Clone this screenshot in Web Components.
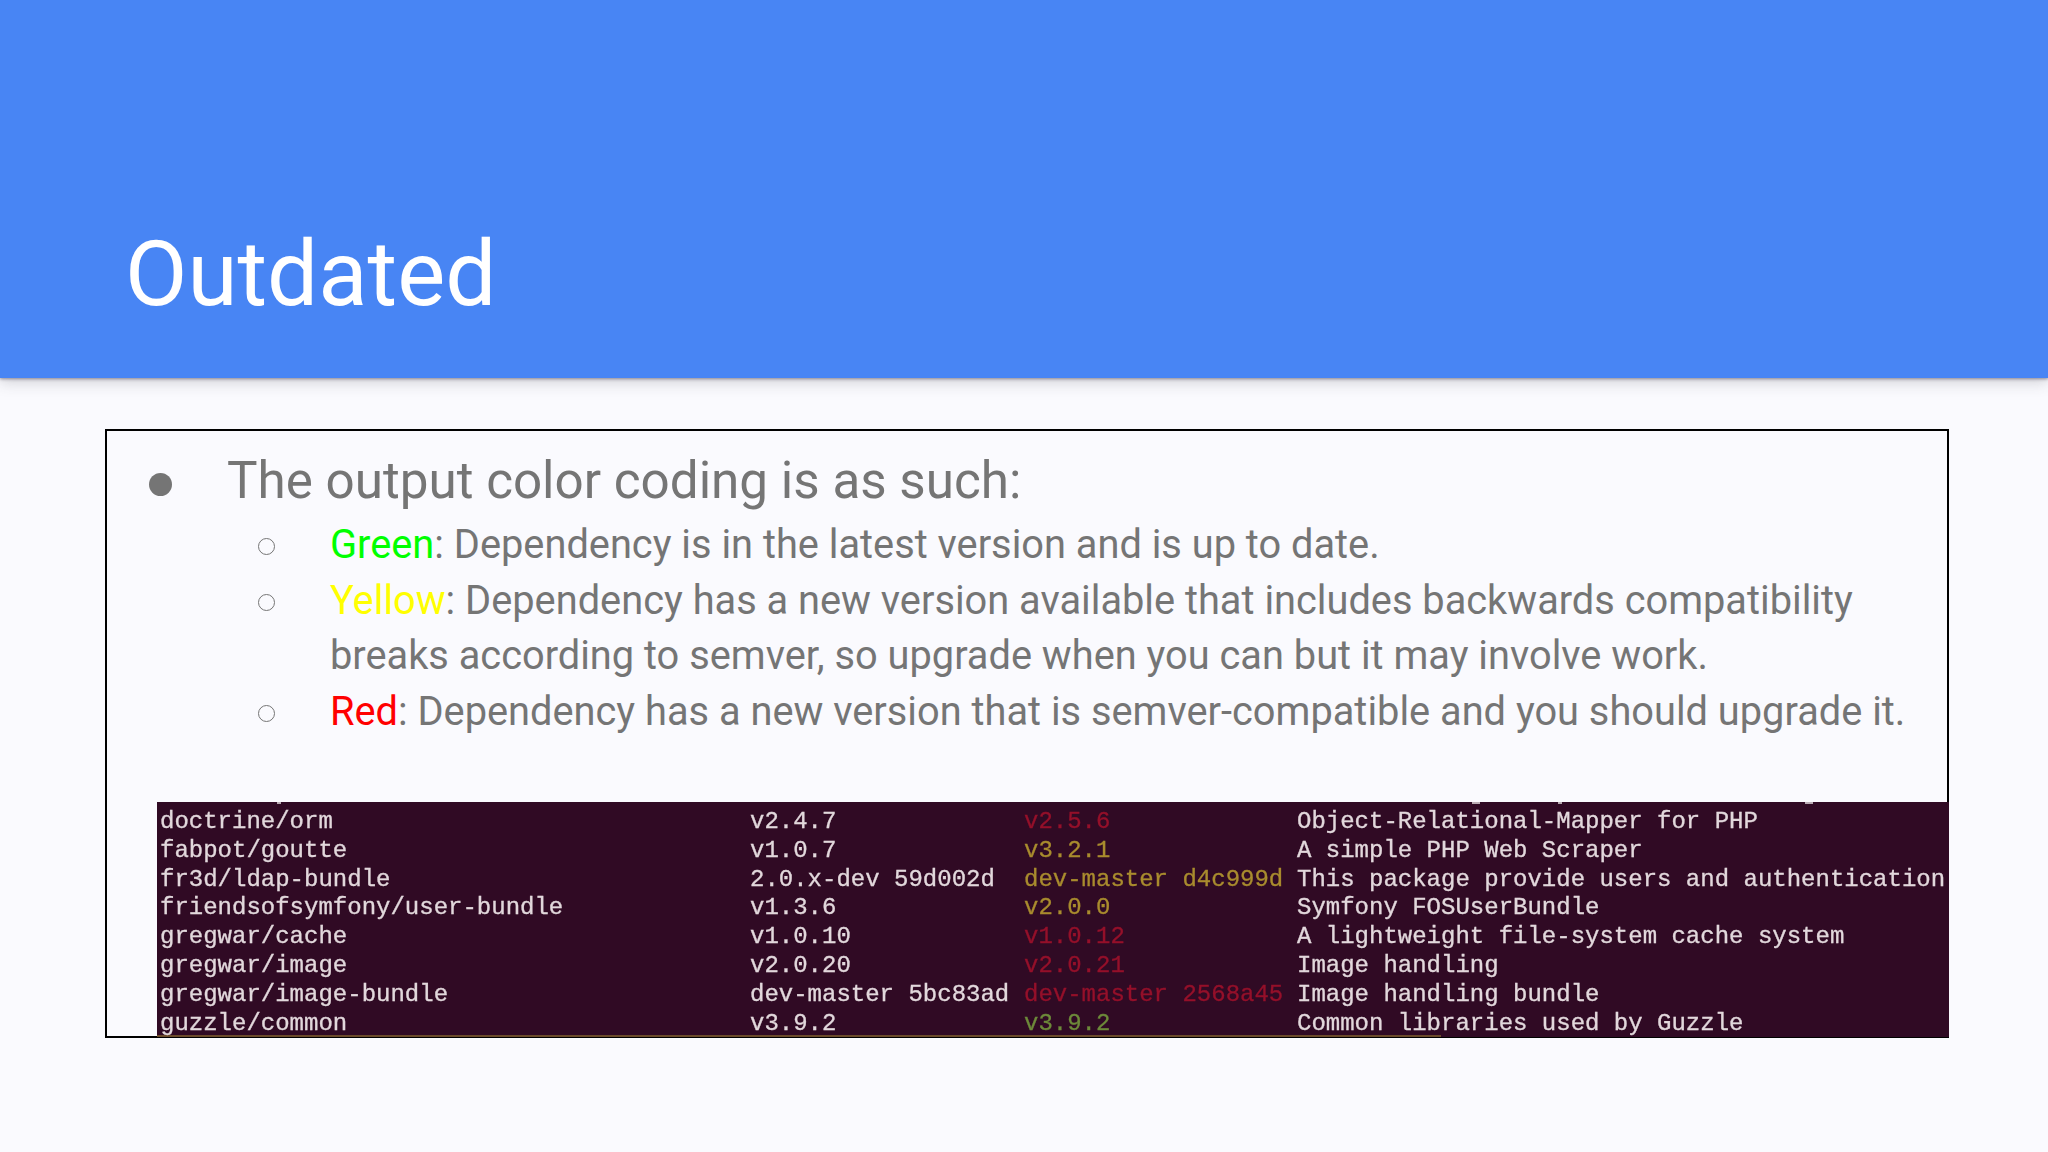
<!DOCTYPE html>
<html>
<head>
<meta charset="utf-8">
<title>Outdated</title>
<style>
    html, body { margin: 0; padding: 0; background: #fafafe; }
    body { width: 2048px; height: 1152px; overflow: hidden; font-family: Roboto, sans-serif; }
</style>
</head>
<body>

<template id="SlideHeader">
    <style>
        :host {
            display: flex;
            align-items: flex-end;
            box-sizing: border-box;
            height: 378px;
            padding: 0 0 49px 125px;
            background: #4885f4;
            box-shadow: 0 1px 3px rgba(60, 50, 70, .5), 0 4px 14px rgba(60, 60, 70, .22);
            position: relative;
            color: #fff;
            font: 400 90.7px/1.2 Roboto, sans-serif;
        }
    </style>
    <slot></slot>
</template>

<template id="SlideBox">
    <style>
        :host {
            display: block;
            box-sizing: border-box;
            width: 1844px;
            height: 609px;
            margin: 51px 0 0 105px;
            border: 2px solid #000;
            padding-top: 20px;
        }
    </style>
    <slot></slot>
</template>

<template id="TopItem">
    <style>
        :host {
            display: flex;
            align-items: flex-start;
            height: 66px;
            padding-left: 42px;
            color: #757575;
            font: 400 51.2px/60px Roboto, sans-serif;
        }
        i {
            flex: none;
            width: 23px;
            height: 23px;
            margin: 21.5px 55px 0 0;
            border-radius: 50%;
            background: #757575;
        }
    </style>
    <i></i><slot></slot>
</template>

<template id="SubItem">
    <style>
        :host {
            display: flex;
            align-items: flex-start;
            padding-left: 151px;
            color: #757575;
            font: 400 39.77px/55.5px Roboto, sans-serif;
        }
        i {
            flex: none;
            box-sizing: border-box;
            width: 17px;
            height: 17px;
            margin: 21px 0 0;
            border: 1.5px solid #757575;
            border-radius: 50%;
        }
        div { margin-left: 55px; }
    </style>
    <i></i><div><slot></slot></div>
</template>

<template id="TerminalTable">
    <style>
        :host {
            display: block;
            box-sizing: border-box;
            width: 1792px;
            height: 235px;
            margin: 63px 0 0 50px;
            padding: 6px 0 0 3px;
            /* descender bits of the row cut off above, and the cursor line at the bottom */
            background:
                linear-gradient(#b9abb3, #b9abb3) 120px 0 / 4px 2px no-repeat,
                linear-gradient(#b9abb3, #b9abb3) 1315px 0 / 8px 2px no-repeat,
                linear-gradient(#b9abb3, #b9abb3) 1401px 0 / 4px 2px no-repeat,
                linear-gradient(#b9abb3, #b9abb3) 1648px 0 / 8px 2px no-repeat,
                linear-gradient(#6b4a2a, #6b4a2a) 0 100% / 1284px 2px no-repeat,
                #300a24;
            overflow: hidden;
            color: #e2d8dc;
            font: 24px/28.8px "Liberation Mono", monospace;
            -webkit-text-stroke: .3px currentColor;
        }
    </style>
    <slot></slot>
</template>

<template id="TerminalRow">
    <style>
        :host {
            display: grid;
            grid-template-columns: 590px 274px 273px 1fr;
            height: 28.8px;
            white-space: pre;
            filter: blur(.5px);
        }
        ::slotted(.r) { color: #94102a; }
        ::slotted(.y) { color: #a98c2e; }
        ::slotted(.g) { color: #6d8a3a; }
    </style>
    <slot></slot>
</template>

<slide-header>Outdated</slide-header>
<slide-box>
    <top-item>The output color coding is as such:</top-item>
    <sub-item><span style="color:#00ff00">Green</span>: Dependency is in the latest version and is up to date.</sub-item>
    <sub-item><span style="color:#ffff00">Yellow</span>: Dependency has a new version available that includes backwards compatibility breaks according to semver, so upgrade when you can but it may involve work.</sub-item>
    <sub-item><span style="color:#ff0000">Red</span>: Dependency has a new version that is semver-compatible and you should upgrade it.</sub-item>
    <terminal-table>
        <terminal-row><span>doctrine/orm</span><span>v2.4.7</span><span class="r">v2.5.6</span><span>Object-Relational-Mapper for PHP</span></terminal-row>
        <terminal-row><span>fabpot/goutte</span><span>v1.0.7</span><span class="y">v3.2.1</span><span>A simple PHP Web Scraper</span></terminal-row>
        <terminal-row><span>fr3d/ldap-bundle</span><span>2.0.x-dev 59d002d</span><span class="y">dev-master d4c999d</span><span>This package provide users and authentication</span></terminal-row>
        <terminal-row><span>friendsofsymfony/user-bundle</span><span>v1.3.6</span><span class="y">v2.0.0</span><span>Symfony FOSUserBundle</span></terminal-row>
        <terminal-row><span>gregwar/cache</span><span>v1.0.10</span><span class="r">v1.0.12</span><span>A lightweight file-system cache system</span></terminal-row>
        <terminal-row><span>gregwar/image</span><span>v2.0.20</span><span class="r">v2.0.21</span><span>Image handling</span></terminal-row>
        <terminal-row><span>gregwar/image-bundle</span><span>dev-master 5bc83ad</span><span class="r">dev-master 2568a45</span><span>Image handling bundle</span></terminal-row>
        <terminal-row><span>guzzle/common</span><span>v3.9.2</span><span class="g">v3.9.2</span><span>Common libraries used by Guzzle</span></terminal-row>
    </terminal-table>
</slide-box>

<script>

    class TemplateElement extends HTMLElement {
        constructor() {
            super();
            this.attachShadow({ mode: 'open' });
            const template = document.querySelector('#' + this.constructor.templateId);
            this.shadowRoot.appendChild(template.content.cloneNode(true));
        }
    }

    class SlideHeader extends TemplateElement { static get templateId() { return 'SlideHeader'; } }
    class SlideBox extends TemplateElement { static get templateId() { return 'SlideBox'; } }
    class TopItem extends TemplateElement { static get templateId() { return 'TopItem'; } }
    class SubItem extends TemplateElement { static get templateId() { return 'SubItem'; } }
    class TerminalTable extends TemplateElement { static get templateId() { return 'TerminalTable'; } }
    class TerminalRow extends TemplateElement { static get templateId() { return 'TerminalRow'; } }

    window.customElements.define('slide-header', SlideHeader);
    window.customElements.define('slide-box', SlideBox);
    window.customElements.define('top-item', TopItem);
    window.customElements.define('sub-item', SubItem);
    window.customElements.define('terminal-table', TerminalTable);
    window.customElements.define('terminal-row', TerminalRow);

</script>
</body>
</html>
